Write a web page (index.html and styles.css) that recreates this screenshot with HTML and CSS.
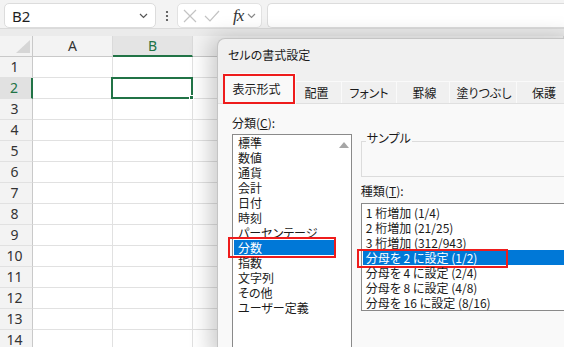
FILE: index.html
```html
<!DOCTYPE html>
<html lang="ja">
<head>
  <meta charset="UTF-8" />
  <meta name="viewport" content="width=device-width, initial-scale=1.0" />
  <title>セルの書式設定</title>
  <link rel="stylesheet" href="styles.css">
</head>
<body>
  <div class="formula-bar">
    <div class="name-box">
      <span>B2</span>
      <svg class="chev" width="9" height="6" viewBox="0 0 9 6"><path d="M1 1l3.5 3.5L8 1" fill="none" stroke="#555" stroke-width="1.2"/></svg>
    </div>
    <div class="dots">
      <svg width="4" height="12" viewBox="0 0 4 12"><circle cx="2" cy="2" r="1.1" fill="#444"/><circle cx="2" cy="6" r="1.1" fill="#444"/><circle cx="2" cy="10" r="1.1" fill="#444"/></svg>
    </div>
    <div class="fx-group">
      <svg class="icon-x" width="14" height="14" viewBox="0 0 14 14"><path d="M1 1l12 12M13 1L1 13" stroke="#c3c3c3" stroke-width="1.2"/></svg>
      <svg class="icon-ok" width="16" height="12" viewBox="0 0 16 12"><path d="M1 6l5 5L15 1" fill="none" stroke="#c3c3c3" stroke-width="1.2"/></svg>
      <span class="fx">fx</span>
      <svg class="chev" width="9" height="6" viewBox="0 0 9 6"><path d="M1 1l3.5 3.5L8 1" fill="none" stroke="#888" stroke-width="1.2"/></svg>
    </div>
    <div class="formula-input"></div>
  </div>
  <div class="band"></div>

  <div class="sheet">
    <div class="corner">
      <svg width="14" height="13" viewBox="0 0 14 13"><polygon points="14,0 14,13 0,13" fill="#d6d6d6"/></svg>
    </div>
    <div class="col-head">A</div>
    <div class="col-head active">B</div>
    <div class="col-head"></div>

    <div class="row-head">1</div><div class="cell"></div><div class="cell"></div><div class="cell"></div>
    <div class="row-head active">2</div><div class="cell"></div><div class="cell selected"><span class="handle"></span></div><div class="cell"></div>
    <div class="row-head">3</div><div class="cell"></div><div class="cell"></div><div class="cell"></div>
    <div class="row-head">4</div><div class="cell"></div><div class="cell"></div><div class="cell"></div>
    <div class="row-head">5</div><div class="cell"></div><div class="cell"></div><div class="cell"></div>
    <div class="row-head">6</div><div class="cell"></div><div class="cell"></div><div class="cell"></div>
    <div class="row-head">7</div><div class="cell"></div><div class="cell"></div><div class="cell"></div>
    <div class="row-head">8</div><div class="cell"></div><div class="cell"></div><div class="cell"></div>
    <div class="row-head">9</div><div class="cell"></div><div class="cell"></div><div class="cell"></div>
    <div class="row-head">10</div><div class="cell"></div><div class="cell"></div><div class="cell"></div>
    <div class="row-head">11</div><div class="cell"></div><div class="cell"></div><div class="cell"></div>
    <div class="row-head">12</div><div class="cell"></div><div class="cell"></div><div class="cell"></div>
    <div class="row-head">13</div><div class="cell"></div><div class="cell"></div><div class="cell"></div>
    <div class="row-head">14</div><div class="cell"></div><div class="cell"></div><div class="cell"></div>
  </div>

  <div class="dialog">
    <div class="dlg-title">セルの書式設定</div>
    <div class="tabs">
      <div class="tab active">表示形式</div>
      <div class="tab">配置</div>
      <div class="tab">フォント</div>
      <div class="tab">罫線</div>
      <div class="tab">塗りつぶし</div>
      <div class="tab">保護</div>
    </div>
    <div class="panel">
      <div class="col-left">
        <div class="label">分類(<u>C</u>):</div>
        <div class="listbox category">
          <ul class="items">
            <li>標準</li>
            <li>数値</li>
            <li>通貨</li>
            <li>会計</li>
            <li>日付</li>
            <li>時刻</li>
            <li>パーセンテージ</li>
            <li class="selected">分数<span class="mark mark-cat"></span></li>
            <li>指数</li>
            <li>文字列</li>
            <li>その他</li>
            <li>ユーザー定義</li>
          </ul>
          <div class="scrollbar">
            <svg width="10" height="6" viewBox="0 0 10 6"><polygon points="5,0 10,6 0,6" fill="#a6a6a6"/></svg>
          </div>
        </div>
      </div>
      <div class="col-right">
        <fieldset class="sample">
          <legend>サンプル</legend>
        </fieldset>
        <div class="label">種類(<u>T</u>):</div>
        <ul class="listbox types">
          <li>1 桁増加 (1/4)</li>
          <li>2 桁増加 (21/25)</li>
          <li>3 桁増加 (312/943)</li>
          <li class="selected">分母を 2 に設定 (1/2)<span class="mark mark-type"></span></li>
          <li>分母を 4 に設定 (2/4)</li>
          <li>分母を 8 に設定 (4/8)</li>
          <li>分母を 16 に設定 (8/16)</li>
        </ul>
      </div>
    </div>
  </div>
</body>
</html>
```

FILE: styles.css
```css
* {
  box-sizing: border-box;
}

html, body {
  margin: 0;
}

body {
  width: 564px;
  height: 347px;
  overflow: hidden;
  position: relative;
  background: #fff;
  font-family: "Noto Sans", "Noto Sans CJK JP", sans-serif;
  color: #222;
}

/* formula bar */
.formula-bar {
  height: 29px;
  display: flex;
  align-items: flex-start;
  padding: 3px 0 0 4px;
  background: #f3f3f3;
  border-bottom: 1px solid #dadada;
}

.name-box {
  width: 152px;
  height: 25px;
  display: flex;
  align-items: center;
  justify-content: space-between;
  padding: 0 7px 0 7px;
  background: #fff;
  border: 1px solid #dcdcdc;
  border-radius: 5px;
  font-size: 15px;
  color: #1f1f1f;
}

.dots {
  width: 21px;
  height: 25px;
  display: flex;
  align-items: center;
  justify-content: center;
}

.fx-group {
  width: 85px;
  height: 25px;
  display: flex;
  align-items: center;
  padding-left: 5px;
  background: #fff;
  border: 1px solid #e2e2e2;
  border-radius: 5px;
}

.icon-ok {
  margin-left: 7px;
}

.fx {
  margin-left: 13px;
  font-family: "Liberation Serif", serif;
  font-style: italic;
  font-size: 17px;
  color: #333;
  letter-spacing: -1px;
}

.fx-group .chev {
  margin-left: 4px;
}

.formula-input {
  flex: 1;
  height: 25px;
  margin-left: 5px;
  background: #fff;
  border: 1px solid #dcdcdc;
  border-right: none;
  border-radius: 5px 0 0 5px;
}

.band {
  height: 7px;
  background: #ebebeb;
}

/* sheet */
.sheet {
  display: grid;
  grid-template-columns: 33px 80px 80px 1fr;
  grid-auto-rows: 21px;
}

.corner {
  display: flex;
  align-items: flex-end;
  justify-content: flex-end;
  padding: 0 2px 3px 0;
  background: #f3f3f3;
  border-right: 1px solid #c9c9c9;
  border-bottom: 1px solid #c9c9c9;
}

.col-head {
  background: #f3f3f3;
  border-right: 1px solid #dadada;
  border-bottom: 1px solid #c9c9c9;
  text-align: center;
  font-size: 14px;
  line-height: 20px;
  color: #333;
}

.col-head.active {
  background: #e4e4e4;
  color: #217346;
  border-bottom: 2px solid #217346;
}

.row-head {
  background: #f3f3f3;
  border-right: 1px solid #c9c9c9;
  border-bottom: 1px solid #e1e1e1;
  text-align: center;
  padding-right: 3px;
  font-size: 14px;
  line-height: 20px;
  color: #333;
}

.row-head.active {
  background: #e1e1e1;
  color: #217346;
  border-right: 2px solid #217346;
}

.cell {
  position: relative;
  border-right: 1px solid #e1e1e1;
  border-bottom: 1px solid #e1e1e1;
}

.cell.selected::after {
  content: "";
  position: absolute;
  left: -2px;
  top: -1px;
  right: -1px;
  bottom: -1px;
  border: 2px solid #217346;
}

.handle {
  position: absolute;
  right: -2px;
  bottom: -2px;
  width: 5px;
  height: 5px;
  background: #217346;
  border: 1px solid #fff;
  z-index: 1;
}

/* dialog */
.dialog {
  position: absolute;
  left: 217px;
  top: 38px;
  width: 360px;
  height: 320px;
  background: #f0f0f0;
  border: 1px solid #c4c4c4;
  border-right: none;
  border-radius: 8px 0 0 0;
  box-shadow: -6px 0 22px rgba(0, 0, 0, 0.22);
  font-family: "Noto Sans CJK JP", sans-serif;
  font-feature-settings: "palt";
  font-size: 12px;
  color: #1a1a1a;
}

.dlg-title {
  height: 33px;
  line-height: 32px;
  padding-left: 10px;
}

.tabs {
  display: flex;
  align-items: flex-end;
  height: 31px;
  padding-left: 6px;
}

.tab {
  display: flex;
  align-items: center;
  justify-content: center;
  height: 22px;
  border-top: 1px solid #fafafa;
  border-right: 1px solid #fafafa;
}

.tab:nth-child(2) { width: 46px; padding-right: 4px; }
.tab:nth-child(3) { width: 55px; }
.tab:nth-child(4) { width: 53px; padding-left: 3px; }
.tab:nth-child(5) { width: 67px; padding-left: 2px; }
.tab:nth-child(6) { width: 50px; padding-left: 5px; }

.tab.active {
  position: relative;
  width: 72px;
  height: 31px;
  margin-bottom: -1px;
  background: #f9f9f9;
  padding: 0 6px 2px 0;
}

.tab.active::after {
  content: "";
  position: absolute;
  left: -1px;
  top: 0;
  right: 0;
  bottom: 0;
  border: 2px solid #ee1c1c;
}

.panel {
  display: flex;
  gap: 9px;
  height: 260px;
  padding-left: 14px;
  background: #f9f9f9;
  border-top: 1px solid #e0e0e0;
}

.label {
  height: 16px;
  line-height: 16px;
}

.col-left {
  width: 122px;
  padding-top: 11px;
}

.col-left .label {
  margin-bottom: 3px;
}

.listbox {
  margin: 0;
  padding: 0;
  list-style: none;
  background: #fff;
  border: 1px solid #8a8a8a;
}

.listbox li {
  position: relative;
  height: 15px;
  line-height: 15px;
  white-space: nowrap;
}

.category {
  display: flex;
  height: 230px;
  padding: 0 1px;
}

.items {
  flex: 1;
  margin: 0;
  padding: 0;
  list-style: none;
}

.items li {
  padding-left: 4px;
}

.scrollbar {
  width: 15px;
  display: flex;
  justify-content: flex-end;
  padding: 7px 1px 0 0;
}

.listbox li.selected {
  background: #0078d7;
  color: #fff;
}

.mark {
  position: absolute;
  border: 2px solid #ee1c1c;
}

.mark-cat {
  left: -6px;
  right: -1px;
  top: -3px;
  bottom: -3px;
}

.mark-type {
  left: -6px;
  width: 151px;
  top: -1px;
  bottom: -3px;
}

.col-right {
  width: 220px;
}

.sample {
  height: 47px;
  margin: 26px 0 0;
  padding: 0 0 0 4px;
  border: 1px solid #dcdcdc;
}

.sample legend {
  padding: 0 1px 6px;
  line-height: 16px;
}

.col-right .label {
  margin-top: 6px;
  margin-bottom: 4px;
}

.types {
  height: 108px;
  padding: 1px 0 0 1px;
}

.types li {
  padding-left: 3px;
}
```
